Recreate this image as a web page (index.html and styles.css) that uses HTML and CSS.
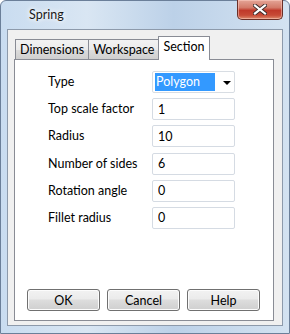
FILE: index.html
```html
<!DOCTYPE html>
<html lang="en">
<head>
    <meta charset="UTF-8">
    <title>Spring</title>
    <link rel="stylesheet" href="styles.css">
</head>
<body>

    <div class="window">
        <!-- Title bar -->
        <div class="titlebar">
            <span class="title">Spring</span>
            <button class="close-btn" aria-label="Close">
                <svg width="14" height="11" viewBox="0 0 14 11">
                    <path d="M2 1.5 L12 9.5 M12 1.5 L2 9.5" stroke="#3b2b2b" stroke-width="4" stroke-linecap="square"/>
                    <path d="M2 1.5 L12 9.5 M12 1.5 L2 9.5" stroke="#fff" stroke-width="2.2" stroke-linecap="square"/>
                </svg>
            </button>
        </div>

        <div class="client">
            <!-- Tabs -->
            <div class="tabs">
                <div class="tab">Dimensions</div>
                <div class="tab">Workspace</div>
                <div class="tab active">Section</div>
            </div>

            <div class="panel">
                <div class="form">
                    <label>Type</label>
                    <div class="select">
                        <span class="selected">Polygon</span>
                        <span class="arrow"></span>
                    </div>

                    <label>Top scale factor</label>
                    <input type="text" value="1">

                    <label>Radius</label>
                    <input type="text" value="10">

                    <label>Number of sides</label>
                    <input type="text" value="6">

                    <label>Rotation angle</label>
                    <input type="text" value="0">

                    <label>Fillet radius</label>
                    <input type="text" value="0">
                </div>

                <div class="buttons">
                    <button class="btn">OK</button>
                    <button class="btn">Cancel</button>
                    <button class="btn">Help</button>
                </div>
            </div>
        </div>
    </div>

</body>
</html>
```

FILE: styles.css
```css
/* Window frame */
body {
    margin: 0;
    font-family: 'Lato', 'Noto Sans', sans-serif;
    font-size: 12.5px;
    color: #000;
    background: #fff;
}

.window {
    width: 290px;
    height: 334px;
    box-sizing: border-box;
    border: 1px solid #6b7f99;
    border-radius: 6px 6px 0 0;
    background: linear-gradient(90deg, #c9dcf0 0%, #d9e6f3 30%, #bcd1e8 60%, #d3e2f1 100%);
    display: flex;
    flex-direction: column;
}

.titlebar {
    height: 28px;
    position: relative;
    flex-shrink: 0;
}

.title {
    position: absolute;
    left: 28px;
    top: 6px;
    color: #1a1a1a;
    text-shadow: 0 0 6px #fff, 0 0 4px #fff;
}

.close-btn {
    position: absolute;
    right: 6px;
    top: -1px;
    width: 46px;
    height: 20px;
    border: 1px solid #6a2f27;
    border-top: none;
    border-radius: 0 0 5px 5px;
    background: linear-gradient(180deg, #e4a597 0%, #d37a69 40%, #c0392a 55%, #c74a36 80%, #dc8a6c 100%);
    box-shadow: inset 0 0 0 1px rgba(255, 210, 200, 0.5);
    padding: 0;
    display: flex;
    align-items: center;
    justify-content: center;
}

/* Client area */
.client {
    flex: 1;
    margin: 0 6px 7px 6px;
    border: 1px solid #8d9aab;
    background: #f0f0f0;
    padding: 7px 8px 4px 6px;
    display: flex;
    flex-direction: column;
}

.tabs {
    display: flex;
    align-items: flex-end;
    height: 22px;
    margin-left: 1px;
    position: relative;
    z-index: 1;
}

.tab {
    height: 20px;
    box-sizing: border-box;
    padding: 1px 4px 0 4px;
    border: 1px solid #898c95;
    border-bottom: none;
    margin-right: -1px;
    background: linear-gradient(180deg, #f2f2f2 0%, #ebebeb 50%, #dddddd 51%, #cfcfcf 100%);
    line-height: 18px;
}

.tab.active {
    height: 24px;
    margin-bottom: -1px;
    background: #fff;
    padding: 0 4px;
    line-height: 20px;
}

.panel {
    flex: 1;
    background: #fff;
    border: 1px solid #898c95;
    padding: 11px 12px 9px 12px;
    display: flex;
    flex-direction: column;
}

/* Form grid */
.form {
    display: grid;
    grid-template-columns: 104px 83px;
    grid-auto-rows: 22px;
    row-gap: 5.2px;
    padding-left: 21px;
    align-items: center;
}

.form label {
    line-height: 22px;
}

.form input,
.select {
    height: 22px;
    box-sizing: border-box;
    border: 1px solid #d5dbe3;
    border-radius: 2px;
    font: inherit;
    padding: 0 5px;
    margin: 0;
    width: 83px;
    color: #000;
    background: #fff;
    outline: none;
}

.select {
    display: flex;
    align-items: center;
    padding: 1px 2px;
    border-color: #d8dde3;
}

.selected {
    background: #3399ff;
    color: #fff;
    width: 60px;
    height: 18px;
    line-height: 18px;
    padding-left: 1px;
    box-sizing: border-box;
}

.arrow {
    margin-left: 8px;
    width: 0;
    height: 0;
    border-left: 4px solid transparent;
    border-right: 4px solid transparent;
    border-top: 4px solid #000;
    margin-top: 2px;
}

/* Buttons */
.buttons {
    margin-top: auto;
    display: flex;
    gap: 7px;
}

.btn {
    width: 73px;
    height: 22px;
    font: inherit;
    color: #000;
    border: 1px solid #707070;
    border-radius: 3px;
    background: linear-gradient(180deg, #f2f2f2 0%, #ebebeb 45%, #dddddd 50%, #cfcfcf 100%);
    box-shadow: inset 0 0 0 1px #fcfcfc;
    padding: 0;
}
```
